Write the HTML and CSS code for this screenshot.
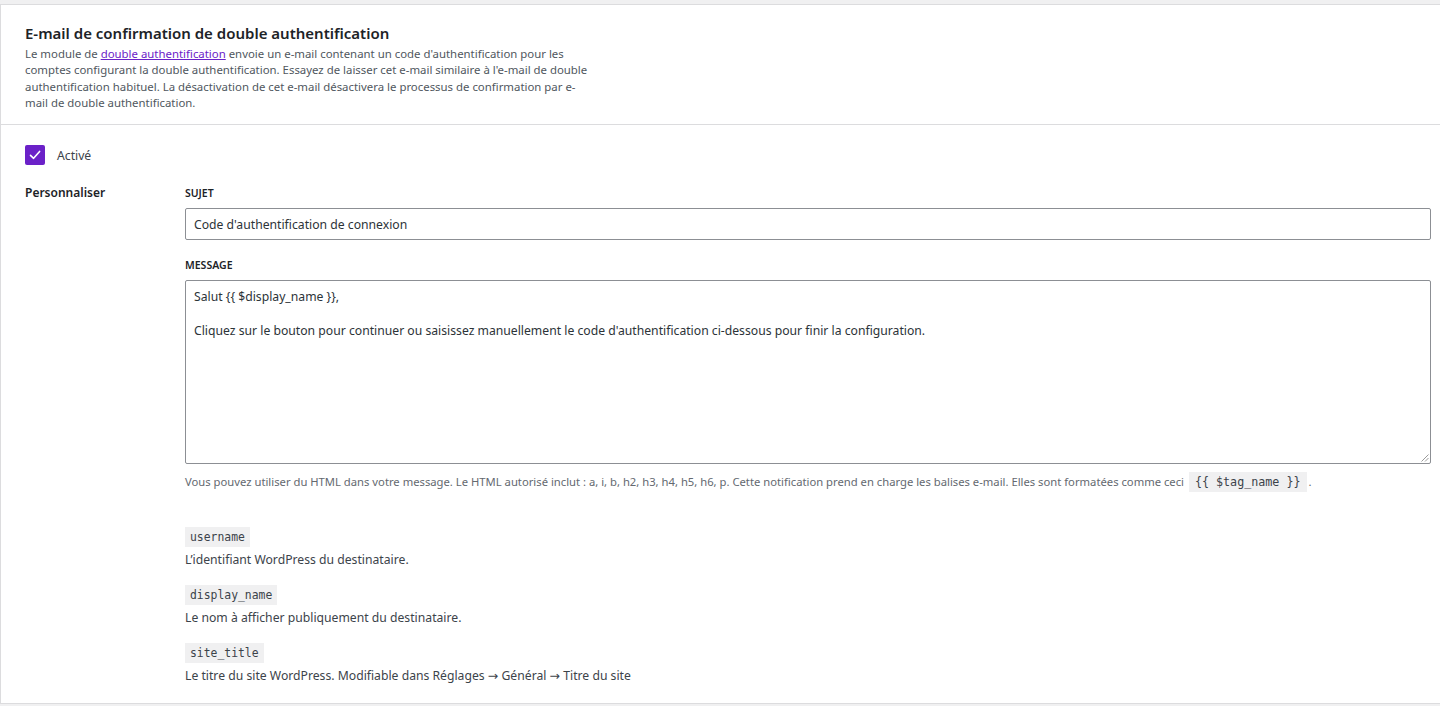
FILE: index.html
```html
<!DOCTYPE html>
<html lang="fr">
<head>
<meta charset="utf-8">
<title>E-mail de confirmation de double authentification</title>
<link rel="stylesheet" href="styles.css">
</head>
<body>
<div class="card">
  <div class="card-header">
    <h2 class="card-title">E-mail de confirmation de double authentification</h2>
    <p class="card-desc">Le module de <a href="#" class="link">double authentification</a> envoie un e-mail contenant un code d'authentification pour les comptes configurant la double authentification. Essayez de laisser cet e-mail similaire à l'e-mail de double authentification habituel. La désactivation de cet e-mail désactivera le processus de confirmation par e-mail de double authentification.</p>
  </div>
  <div class="card-body">
    <label class="toggle">
      <span class="checkbox">
        <svg width="14" height="14" viewBox="0 0 14 14"><path d="M2.5 7.4 L5.6 10.3 L11.6 3.4" fill="none" stroke="#fff" stroke-width="1.6" stroke-linecap="round" stroke-linejoin="round"/></svg>
      </span>
      <span class="toggle-label">Activé</span>
    </label>
    <div class="row">
      <div class="row-label">Personnaliser</div>
      <div class="row-field">
        <div class="field-label">SUJET</div>
        <div class="input">Code d'authentification de connexion</div>
        <div class="field-label msg-label">MESSAGE</div>
        <div class="textarea">
          <p class="ta-line">Salut {{ $display_name }},</p>
          <p class="ta-line">Cliquez sur le bouton pour continuer ou saisissez manuellement le code d'authentification ci-dessous pour finir la configuration.</p>
          <svg class="grip" width="8" height="8" viewBox="0 0 8 8"><path d="M7.5 0.5 L0.5 7.5 M7.5 4 L4 7.5" stroke="#9a9a9a" stroke-width="1"/></svg>
        </div>
        <p class="help">Vous pouvez utiliser du HTML dans votre message. Le HTML autorisé inclut : a, i, b, h2, h3, h4, h5, h6, p. Cette notification prend en charge les balises e-mail. Elles sont formatées comme ceci <code class="code">{{ $tag_name }}</code>.</p>
        <dl class="tags">
          <dt><code class="code">username</code></dt>
          <dd>L’identifiant WordPress du destinataire.</dd>
          <dt><code class="code">display_name</code></dt>
          <dd>Le nom à afficher publiquement du destinataire.</dd>
          <dt><code class="code">site_title</code></dt>
          <dd>Le titre du site WordPress. Modifiable dans Réglages <span class="arrow">→</span> Général <span class="arrow">→</span> Titre du site</dd>
        </dl>
      </div>
    </div>
  </div>
</div>
</body>
</html>
```
FILE: styles.css
```css
html, body {
  margin: 0;
  padding: 0;
}
body {
  background: #f0f0f1;
  font-family: "Noto Sans", "Open Sans", sans-serif;
  color: #3c434a;
  font-size: 12px;
}
.card {
  margin-top: 4px;
  background: #fff;
  border: 1px solid #dcdcde;
  border-right: none;
  height: 700px;
  box-sizing: border-box;
}
.card-header {
  padding: 18px 24px 12px;
  border-bottom: 1px solid #dcdcde;
  height: 120px;
  box-sizing: border-box;
}
.card-title {
  margin: 0 0 3px;
  font-size: 15px;
  font-weight: 600;
  color: #1d2327;
  line-height: 20px;
}
.card-desc {
  margin: 0;
  max-width: 565px;
  font-size: 11.4px;
  line-height: 16.3px;
  color: #50575e;
}
.link {
  color: #6b21c8;
  text-decoration: underline;
}
.card-body {
  padding: 20px 9px 0 24px;
}
.toggle {
  display: flex;
  align-items: center;
  gap: 12px;
  height: 20px;
}
.checkbox {
  width: 20px;
  height: 20px;
  background: #6b21c8;
  border-radius: 2px;
  display: flex;
  align-items: center;
  justify-content: center;
}
.toggle-label {
  font-size: 12.2px;
  color: #3c434a;
}
.row {
  display: grid;
  grid-template-columns: 160px 1fr;
  margin-top: 20px;
}
.row-label {
  font-size: 12px;
  font-weight: 600;
  color: #1d2327;
  line-height: 16px;
}
.field-label {
  font-size: 10.5px;
  font-weight: 600;
  color: #1d2327;
  line-height: 16px;
  margin-bottom: 7px;
}
.msg-label {
  margin-top: 17px;
}
.input {
  height: 32px;
  box-sizing: border-box;
  border: 1px solid #8c8f94;
  border-radius: 2px;
  padding: 0 8px;
  display: flex;
  align-items: center;
  font-size: 12.2px;
  color: #2c3338;
}
.textarea {
  position: relative;
  height: 184px;
  box-sizing: border-box;
  border: 1px solid #8c8f94;
  border-radius: 2px;
  padding: 7px 8px;
  font-size: 12.2px;
  color: #2c3338;
  line-height: 17px;
}
.ta-line {
  margin: 0 0 17px;
}
.grip {
  position: absolute;
  right: 1px;
  bottom: 1px;
}
.help {
  margin: 8px 0 0;
  font-size: 11.26px;
  line-height: 20px;
  color: #646970;
}
.code {
  font-family: "DejaVu Sans Mono", "Liberation Mono", monospace;
  font-size: 11.7px;
  background: #f0f0f1;
  color: #3c434a;
  padding: 3px 6px;
  margin: 0 2px;
}
.tags {
  margin: 35px 0 0;
}
.tags dt {
  margin: 0;
  line-height: 20px;
}
.tags dt .code {
  margin: 0;
  font-size: 11.4px;
  padding: 3px 5px;
}
.tags dd {
  margin: 5px 0 17px;
  font-size: 12.2px;
  line-height: 16px;
  color: #3c434a;
}
.arrow {
  font-family: "DejaVu Sans", sans-serif;
  font-size: 12.5px;
}
```
